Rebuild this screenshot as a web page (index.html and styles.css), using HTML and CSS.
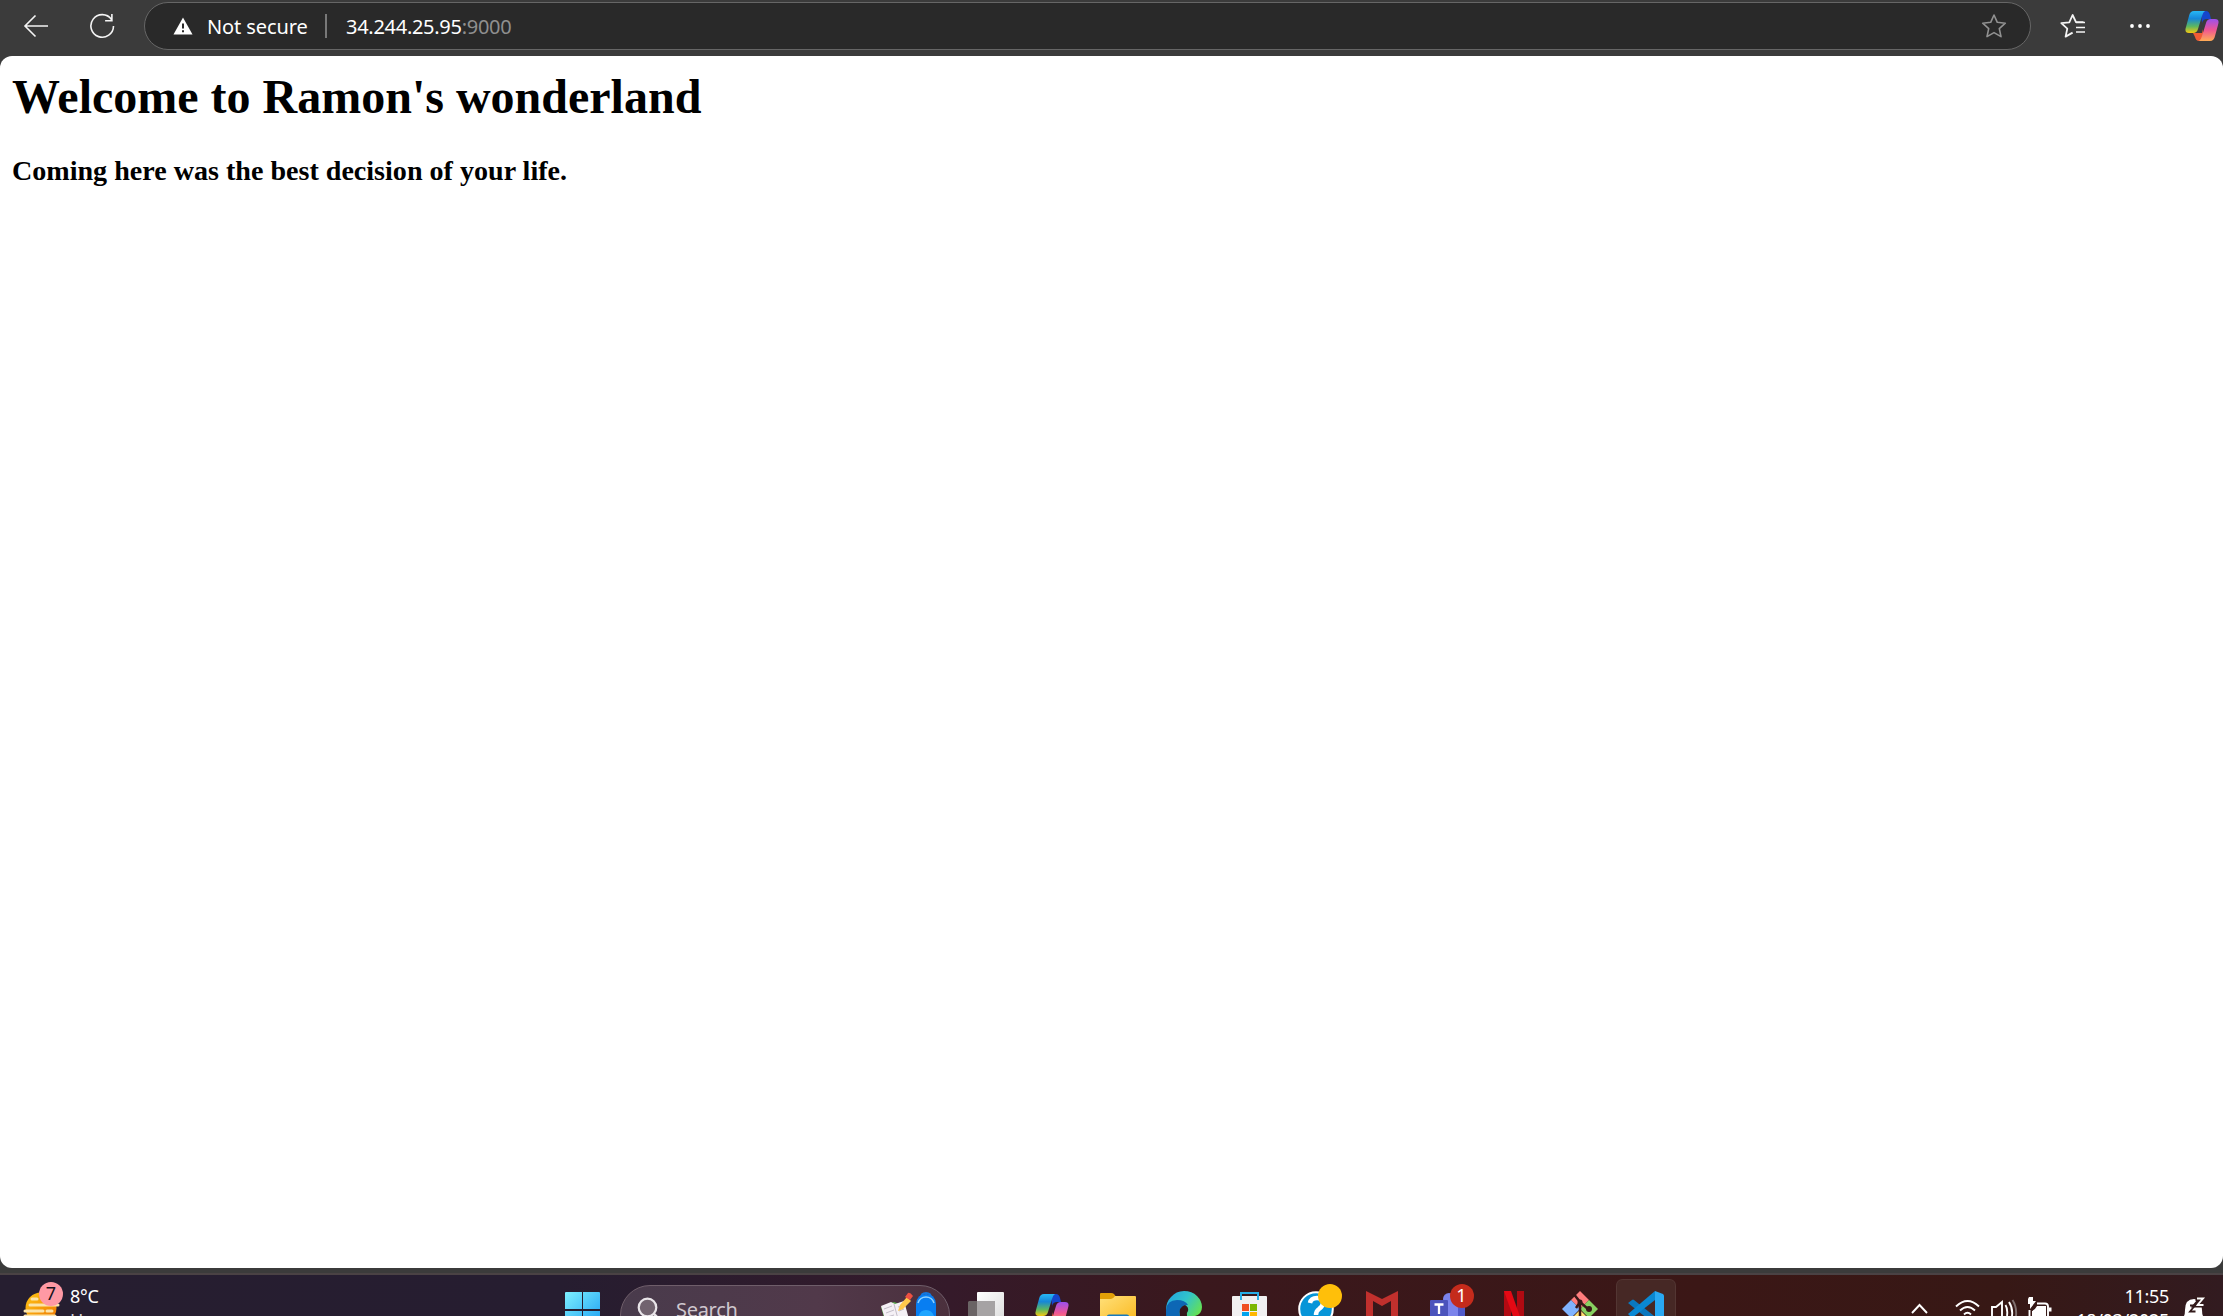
FILE: index.html
```html
<!DOCTYPE html>
<html lang="en">
<head>
<meta charset="utf-8">
<title>34.244.25.95:9000</title>
<link rel="stylesheet" href="styles.css">
</head>
<body>
<header class="toolbar">
  <svg class="icon-back" width="26" height="26" viewBox="0 0 26 26"><path d="M12.5 2.5 2 13l10.500 10.500M2 13h23" fill="none" stroke="#f4f4f4" stroke-width="1.600"/></svg>
  <svg class="icon-reload" width="26" height="26" viewBox="0 0 26 26"><path d="M22.500 6.500A11.300 11.300 0 1 0 24.500 13M22.900 1v6.800h-6.800" fill="none" stroke="#f4f4f4" stroke-width="1.600"/></svg>
  <div class="address">
    <svg class="icon-warning" width="20" height="18" viewBox="0 0 20 18"><path d="M10 .5 19.500 17.500H.5Z" fill="#fff"/><path d="M10 6.500v5M10 13.200v2" stroke="#292929" stroke-width="2"/></svg>
    <span class="secure">Not secure</span>
    <span class="divider"></span>
    <span class="url">34.244.25.95<span class="port">:9000</span></span>
    <svg class="icon-star" width="26" height="26" viewBox="0 0 26 26"><path d="m13 2 3.300 7.300 8 .9-6 5.400 1.700 8-7-4-7 4 1.700-8-6-5.400 8-.9Z" fill="none" stroke="#919191" stroke-width="1.600" stroke-linejoin="round"/></svg>
  </div>
  <svg class="icon-favorites" width="26" height="26" viewBox="0 0 26 26"><path d="M23.500 9.200H16L12.600 2 9.300 9.300l-8 .9 6 5.400-1.700 8 7-4" fill="none" stroke="#f4f4f4" stroke-width="1.800" stroke-linejoin="round"/><path d="M16 9.500h9M16 14.500h9M16 19h9" stroke="#f4f4f4" stroke-width="1.700"/></svg>
  <svg class="icon-more" width="20" height="6" viewBox="0 0 20 6"><g fill="#fff"><circle cx="2" cy="3" r="1.900"/><circle cx="10" cy="3" r="1.900"/><circle cx="18" cy="3" r="1.900"/></g></svg>
  <svg class="icon-copilot" width="34" height="32" viewBox="0 0 34 32">
    <defs>
      <linearGradient id="cpA" x1="0" y1="0" x2="0" y2="1"><stop offset="0" stop-color="#27b8f5"/><stop offset=".35" stop-color="#1687d8"/><stop offset=".7" stop-color="#5db760"/><stop offset="1" stop-color="#f5c911"/></linearGradient>
      <linearGradient id="cpB" x1="0" y1="0" x2="0" y2="1"><stop offset="0" stop-color="#9b50ee"/><stop offset=".5" stop-color="#f05592"/><stop offset="1" stop-color="#ffac55"/></linearGradient>
    </defs>
    <g id="copilot">
      <path d="M16 1h5q3 0 4 4l1 4h-4q-4 0-5 4Z" fill="#1546cc"/>
      <path d="M8 23h9l1-4 0 12h-4q-3 0-4-4Z" fill="#f05b35"/>
      <path d="M9 1h11q-2 1-3 5l-4 13q-1 4-5 4H4q-5 0-3-6L4 6q1-5 5-5Z" fill="url(#cpA)"/>
      <path d="M25 31H14q2-1 3-5l4-13q1-4 5-4h4q5 0 3 6l-3 11q-1 5-5 5Z" fill="url(#cpB)"/>
    </g>
  </svg>
</header>

<main class="page">
  <h1>Welcome to Ramon's wonderland</h1>
  <h3>Coming here was the best decision of your life.</h3>
</main>

<footer class="taskbar">
  <div class="weather">
    <svg width="46" height="41" viewBox="0 0 46 41">
      <defs><linearGradient id="sun" x1="0" y1="0" x2="1" y2="1"><stop offset="0" stop-color="#ffc514"/><stop offset="1" stop-color="#ed7300"/></linearGradient></defs>
      <circle cx="24" cy="33" r="15.500" fill="url(#sun)"/>
      <path d="M15 24h5M13 30h28M8 36h18M30 36h5M8 41h30" stroke="#fbe4aa" stroke-width="3" stroke-linecap="round"/>
      <circle cx="34" cy="19" r="12" fill="#ff99a4"/>
      <text x="34" y="25" text-anchor="middle" class="badge-text" fill="#17121a">7</text>
    </svg>
    <div class="weather-text"><span>8°C</span><span>Haze</span></div>
  </div>

  <svg class="start" width="35" height="41" viewBox="0 0 35 41">
    <defs><linearGradient id="win" x1="0" y1="0" x2="1" y2="1" ><stop offset="0" stop-color="#7df0ff"/><stop offset="1" stop-color="#1b9df2"/></linearGradient></defs>
    <path d="M1 17h16v17H0V18q0-1 1-1ZM18 17h16q1 0 1 1v16H18ZM0 36h17v16H0ZM18 36h17v16H18Z" fill="url(#win)"/>
  </svg>

  <div class="search">
    <svg class="search-icon" width="24" height="31" viewBox="0 0 24 31"><circle cx="11.500" cy="21.500" r="8.800" fill="#71636f" stroke="#e9e5e9" stroke-width="2.200"/><path d="m17.500 27.500 5 5" stroke="#e9e5e9" stroke-width="2.500"/></svg>
    <span class="search-label">Search</span>
    <svg class="search-art" width="60" height="31" viewBox="0 0 60 31">
      <path d="M2 17 15 12l11 4 3 15H6Z" fill="#58a64b"/>
      <path d="m2 16 10-4 4 2 9-3 5 18H6Z" fill="#f4f0f5"/>
      <path d="m15 14 4 15M5 19l8-3M7 23l8-3M8 27l7-2M19 17l4-1M20 21l5-2" stroke="#c3bdc8" stroke-width="1" fill="none"/>
      <path d="m26 8 4 4-8 8-5 2 2-6Z" fill="#ffc84b" transform="translate(2 -1)"/>
      <path d="m27 7 3-4q2-1 5 3l-3 4Z" fill="#ee5142" transform="translate(-1 0)"/>
      <path d="M28 28h12v3H28Z" fill="#e6bd8e"/>
      <path d="M42 8q0-5 5-5t5 5" fill="none" stroke="#1477dd" stroke-width="2"/>
      <path d="M37 31V14q1-10 10-10t10 10v17Z" fill="#087ef2"/>
      <path d="M39 13q2-6 8-6t8 6" fill="none" stroke="#8fd2ff" stroke-width="1.500"/>
      <path d="M39 31q0-11 8-11t9 11Z" fill="#20a5ff"/>
    </svg>
  </div>

  <nav class="apps">
    <svg viewBox="0 0 66 41"><defs><linearGradient id="tv" x1="0" y1="0" x2="1" y2="1"><stop offset="0" stop-color="#fff"/><stop offset="1" stop-color="#dcdcdc"/></linearGradient></defs><rect x="24" y="17" width="27" height="30" rx="1" fill="url(#tv)"/><path d="M16 26h8v15h-9V27Z" fill="#6a6465"/><path d="M24 26h18v15H24Z" fill="#a6a3a4"/></svg>
    <svg viewBox="0 0 66 41"><use href="#copilot" x="16" y="18"/></svg>
    <svg viewBox="0 0 66 41"><defs><linearGradient id="fold" x1="0" y1="0" x2="1" y2="1"><stop offset="0" stop-color="#ffe07a"/><stop offset="1" stop-color="#fbb91f"/></linearGradient></defs><path d="M15 19q0-1 1-1h10q2 0 3 1l3 4v5H15Z" fill="#e2a008"/><path d="M15 24h11q2 0 4-3h20q1 0 1 1v25H15Z" fill="url(#fold)"/><path d="M22 41q0-1.500 2-1.500h18q2 0 2 1.500Z" fill="#1679bd"/></svg>
    <svg viewBox="0 0 66 41"><defs><linearGradient id="edge" x1="0" y1=".2" x2="1" y2=".7"><stop offset="0" stop-color="#23a5df"/><stop offset=".5" stop-color="#31c4cb"/><stop offset="1" stop-color="#65e054"/></linearGradient></defs><path d="M15 35q0-8 5-13 5-6 13-6 8 0 13 5 5 5 5 11 0 7-7 9H15Z" fill="url(#edge)"/><path d="M15 35q1-10 11-10 8 0 11 5-6 0-8 5-1 3 0 6H15Z" fill="#0d67b5"/><path d="M29 41q-2-9 5-11 4 2 3 6-2 2-1 5Z" fill="#35151b"/></svg>
    <svg viewBox="0 0 66 41"><path d="M24 25v-7h17v7" fill="none" stroke="#28aee8" stroke-width="2"/><path d="M15 22q0-1 1-1h7v4h2v-4h15v4h2v-4h7q1 0 1 1v19H15Z" fill="#f1f0f1"/><path d="M25 29h7v7h-7Z" fill="#f04f22"/><path d="M33 29h7v7h-7Z" fill="#7db700"/><path d="M25 37h7v7h-7Z" fill="#00a3ee"/><path d="M33 37h7v7h-7Z" fill="#ffb800"/></svg>
    <svg viewBox="0 0 66 41"><circle cx="33" cy="34" r="16.800" fill="#0795d8" stroke="#fff" stroke-width="2"/><path d="M27 28q1-5 7-5 6 0 6 5 0 3-4 6-3 2-3 6" fill="none" stroke="#fff" stroke-width="4.500"/><circle cx="47" cy="21" r="12" fill="#ffbf0a"/></svg>
    <svg viewBox="0 0 66 41"><path d="m17 16 16 8 16-8v30h-7V26l-9 5-9-5v20h-7Z" fill="#c1302d"/></svg>
    <svg viewBox="0 0 66 41"><circle cx="34" cy="24" r="6" fill="#7b83eb"/><path d="M31 29h12v12H31Z" fill="#7b83eb"/><path d="M43 32h7v9h-7Z" fill="#5059c9"/><rect x="15" y="25" width="18" height="18" rx="1" fill="#4b53bc"/><path d="M19.500 29.500h9M24 29.500V39" stroke="#fff" stroke-width="2.300"/><circle cx="47" cy="21" r="12" fill="#c42b1c"/><text x="46.500" y="27" text-anchor="middle" class="badge-text" fill="#fff">1</text></svg>
    <svg viewBox="0 0 66 41"><path d="M23 16h7v30h-7ZM36 16h7v30h-7Z" fill="#b10a12"/><path d="M23 16h7l12 34h-7Z" fill="#e50914"/></svg>
    <svg viewBox="0 0 66 41"><path d="m33 16 9 9-9 9-9-9Z" fill="#ff7d7d"/><path d="m24 25 9 9-9 9-9-9Z" fill="#80b3ff"/><path d="m42 25 9 9-9 9-9-9Z" fill="#87d160"/><path d="m33 35 8 8H25Z" fill="#ffe173"/><path d="m26 18 7 9v14M33 27l8 7M33 27l-4 6" fill="none" stroke="#381717" stroke-width="2.500"/><circle cx="42" cy="34" r="3" fill="#381717"/><circle cx="33" cy="27" r="2.500" fill="#381717"/></svg>
    <svg viewBox="0 0 66 41"><path d="M3.500 41V11q0-6.500 6.500-6.500h46q6.500 0 6.500 6.500v30" fill="#462825" stroke="#533633"/><path d="m15 28 4-3q1-1 2 0l24 19v8Z" fill="#0a78bf"/><path d="M42 16v9L19 43l-4-4Z" fill="#0a88d3"/><path d="m42 16 8 3q1 1 1 2v26h-9Z" fill="#29a9f3"/></svg>
  </nav>

  <div class="tray">
    <svg width="142" height="41" viewBox="0 0 142 41">
      <g fill="none" stroke="#fff" stroke-width="1.900">
        <path d="m1 38 7.500-8 7.500 8"/>
        <path d="M45 31.500q11.500-11 23 0M49 35.500q7.500-7 15 0M53 39.500q3.500-3.500 7 0"/>
        <path d="M81 41v-9h4l6-5v15M94.500 30q2.500 4 1.500 11M98 27q4 6 3 14"/>
        <path d="M101.500 25q4.500 7 3.500 16" stroke="#80706f"/>
        <path d="M126 28.500h8q3 0 3 3V41M118.500 35v6"/>
      </g>
      <path d="M118 22h4v4h3l-6 8v-5h-2v-5ZM121 41v-5q3-1 5-5h9v10ZM138 32.500h2.500v4H138Z" fill="#fff"/>
    </svg>
    <div class="clock"><span>11:55</span><span>18/03/2025</span></div>
    <svg class="bell" width="22" height="41" viewBox="0 0 22 41"><path d="M0 41q1-2 1-6 0-11 9-11 8 0 8 11 0 4 1 6Z" fill="#fff"/><path d="M11.500 23.500h6l-5.500 6.500h7" fill="none" stroke="#331a1b" stroke-width="5"/><path d="M13 23.500h6l-5.500 6.500h6" fill="none" stroke="#fff" stroke-width="1.900"/><path d="M6 30.500h5l-5 6h5.500" fill="none" stroke="#331a1b" stroke-width="1.800"/></svg>
  </div>
</footer>
</body>
</html>
```
FILE: styles.css
```css
* { box-sizing: border-box; }
body {
  margin: 0;
  width: 2223px;
  height: 1316px;
  overflow: hidden;
  display: flex;
  flex-direction: column;
  background: #3b3b3b;
  font-family: "Noto Sans", sans-serif;
}
svg { display: block; flex: none; }

.toolbar {
  height: 56px;
  flex: none;
  display: flex;
  align-items: center;
  padding: 0 4px 4px 23px;
}
.icon-reload { margin-left: 40px; }
.address {
  width: 1887px;
  height: 48px;
  margin-left: 29px;
  padding: 0 23px 0 28px;
  display: flex;
  align-items: center;
  background: #292929;
  border: 1.500px solid #666;
  border-radius: 24px;
  color: #fff;
  font-size: 20px;
  line-height: 28px;
}
.secure { margin-left: 14px; width: 100px; padding-top: 1px; letter-spacing: -.1px; white-space: nowrap; }
.divider { width: 2px; height: 24px; margin: 0 19px 0 18px; background: #787878; }
.url { padding-top: 1px; letter-spacing: -.28px; }
.port { color: #8f8f8f; }
.icon-star { margin-left: auto; }
.icon-favorites { margin-left: 29px; }
.icon-more { margin-left: 44px; }
.icon-copilot { margin-left: auto; }

.page {
  height: 1212px;
  flex: none;
  padding: 13px 12px 12px;
  background: #fff;
  border-radius: 12px;
  color: #000;
  font-family: "Liberation Serif", serif;
}
.page h1 { margin: 0; font-size: 48px; line-height: 56px; }
.page h3 { margin: 30px 0 0; font-size: 28.080px; line-height: 32px; }

.taskbar {
  height: 43px;
  flex: none;
  margin-top: 5px;
  display: flex;
  overflow: hidden;
  border-top: 2px solid #4a4244;
  background: linear-gradient(90deg, #261e30 0, #261d30 560px, #351a2a 950px, #3a181d 1200px, #3b1716 1700px, #371815 2000px, #321b20 2223px);
  color: #fff;
  font-size: 18px;
  line-height: 24px;
}
.badge-text { font: 18px "Noto Sans", sans-serif; }
.weather { width: 565px; display: flex; padding-left: 17px; }
.weather-text { display: flex; flex-direction: column; padding: 9px 0 0 7px; letter-spacing: -.3px; }
.weather-text span:last-child { color: #d5d2d7; }
.search {
  width: 330px;
  height: 60px;
  margin: 10px 3px 0 20px;
  display: flex;
  border: 1.500px solid #6f5e6a;
  border-radius: 30px;
  background: linear-gradient(90deg, #493b4c, #51394a 60%, #4b303d);
  color: #cfc7ce;
}
.search-icon { margin-left: 15px; }
.search-label { margin: 10px 0 0 16px; font-size: 20px; line-height: 28px; letter-spacing: -.3px; }
.search-art { margin: 4px 10px 0 auto; }
.apps { display: grid; grid-template-columns: repeat(11, 66px); }
.apps svg { width: 66px; height: 41px; }
.tray { display: flex; margin-left: auto; padding-right: 17px; }
.clock { width: 116px; display: flex; flex-direction: column; align-items: flex-end; padding-top: 9px; letter-spacing: -.3px; }
.bell { margin-left: 15px; }
```
